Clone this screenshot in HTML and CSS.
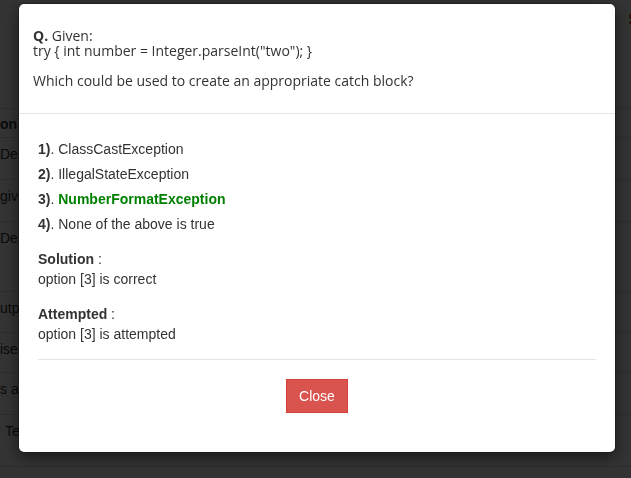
FILE: index.html
```html
<!DOCTYPE html>
<html>
<head>
<meta charset="utf-8">
<link rel="stylesheet" href="styles.css">
</head>
<body>
<div class="page">
  <div class="topbar"><span class="brand">S</span></div>
  <table class="grid">
    <tr class="r-head"><th>on</th><th></th><th></th><th></th><th></th></tr>
    <tr class="r42"><td>Dem</td><td></td><td></td><td></td><td></td></tr>
    <tr class="r42"><td>give</td><td></td><td></td><td></td><td></td></tr>
    <tr class="r70"><td>Der</td><td></td><td></td><td></td><td></td></tr>
    <tr class="r41"><td>utp</td><td></td><td></td><td></td><td></td></tr>
    <tr class="r40"><td>ise</td><td></td><td></td><td></td><td></td></tr>
    <tr class="r42"><td>s a</td><td></td><td></td><td></td><td></td></tr>
    <tr class="r52"><td><span class="ind">Te</span></td><td></td><td></td><td></td><td></td></tr>
    <tr class="r40 last"><td></td><td>Edit Test</td><td>Check</td><td>Subject</td><td>Option</td></tr>
  </table>
</div>

<div class="backdrop">
  <div class="modal">
    <div class="modal-header">
      <p class="q"><b>Q.</b> Given:<br>try { int number = Integer.parseInt("two"); }</p>
      <p class="q">Which could be used to create an appropriate catch block?</p>
    </div>
    <div class="modal-body">
      <div class="opt"><b>1)</b>. ClassCastException</div>
      <div class="opt"><b>2)</b>. IllegalStateException</div>
      <div class="opt"><b>3)</b>. <span class="correct">NumberFormatException</span></div>
      <div class="opt"><b>4)</b>. None of the above is true</div>
      <div class="result"><b>Solution</b> :<br>option [3] is correct</div>
      <div class="result"><b>Attempted</b> :<br>option [3] is attempted</div>
      <hr class="sep">
      <div class="footer"><button class="btn-close">Close</button></div>
    </div>
  </div>
</div>
</body>
</html>
```

FILE: styles.css
```css
html, body {
  margin: 0;
  padding: 0;
  background: #fff;
}
body {
  font-family: "Liberation Sans", Arial, sans-serif;
  font-size: 14px;
  color: #333;
  width: 631px;
  height: 478px;
  overflow: hidden;
}
.page {
  width: 631px;
  height: 478px;
  overflow: hidden;
  background: #fff;
}
.topbar {
  height: 108px;
  display: flex;
  justify-content: flex-end;
  align-items: flex-start;
}
.brand {
  font-size: 16px;
  color: #c0392b;
  margin-top: 11px;
  margin-right: -8px;
  font-weight: bold;
}
.grid {
  border-collapse: collapse;
  width: 631px;
}
.grid th, .grid td {
  border-top: 1px solid #ddd;
  text-align: left;
  vertical-align: top;
  padding: 6px 0 0 0;
  line-height: 20px;
  white-space: nowrap;
}
.grid th { padding-top: 5px; }
.grid th:first-child, .grid td:first-child { width: 80px; }
.r-head { height: 29px; }
.r42 { height: 42px; }
.r41 { height: 41px; }
.r40 { height: 40px; }
.r52 { height: 52px; }
.r70 { height: 70px; }
.ind { padding-left: 5px; }
.last td { padding-top: 8px; }

.backdrop {
  position: fixed;
  top: 0;
  left: 0;
  width: 631px;
  height: 478px;
  background-color: rgba(0, 0, 0, 0.8);
  z-index: 10;
}
.modal {
  margin: 3px 0 0 18px;
  width: 598px;
  height: 450px;
  box-sizing: border-box;
  background: #fff;
  border: 1px solid rgba(0, 0, 0, 0.2);
  border-radius: 6px;
  box-shadow: 0 5px 15px rgba(0, 0, 0, 0.5);
  background-clip: padding-box;
}
.modal-header {
  padding: 24px 14px 25px;
  border-bottom: 1px solid #e5e5e5;
  font-family: "Open Sans", sans-serif;
  font-size: 14px;
  line-height: 15px;
  color: #333;
}
.q { margin: 0 0 15px; }
.q:last-child { margin-bottom: 0; }
.q b { font-weight: 700; }

.modal-body {
  padding: 25px 19px 0;
  color: #333;
}
.opt {
  line-height: 20px;
  margin-bottom: 5px;
}
.correct {
  color: #008000;
  font-weight: bold;
}
.result {
  line-height: 20px;
  margin-top: 15px;
}
.sep {
  border: 0;
  border-top: 1px solid #e5e5e5;
  margin: 15px 0 0;
}
.footer {
  display: flex;
  justify-content: center;
  padding-top: 19px;
}
.btn-close {
  font-family: "Liberation Sans", Arial, sans-serif;
  font-size: 14px;
  line-height: 20px;
  padding: 6px 12px;
  color: #fff;
  background: #d9534f;
  border: 1px solid #d43f3a;
  border-radius: 0;
}
```
